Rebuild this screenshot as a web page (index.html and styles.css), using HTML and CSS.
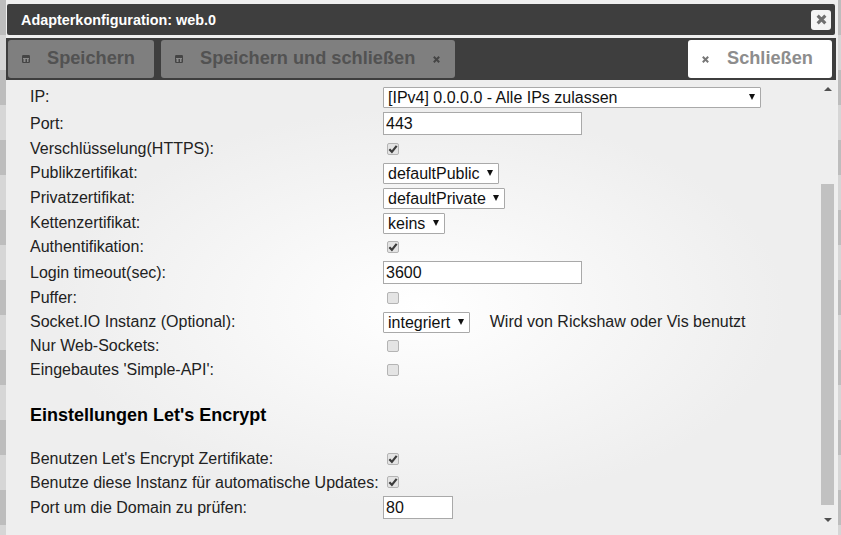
FILE: index.html
```html
<!DOCTYPE html>
<html lang="de">
<head>
<meta charset="utf-8">
<title>Adapterkonfiguration: web.0</title>
<link rel="stylesheet" href="styles.css">
</head>
<body>
<div class="dialog">
  <header class="titlebar">
    <span class="title">Adapterkonfiguration: web.0</span>
    <button class="close-x" aria-label="Schließen"><svg width="11" height="11" viewBox="0 0 10 10"><path d="M1.5 1.5l7 7M8.5 1.5l-7 7" stroke="#6f6f6f" stroke-width="2.8"/></svg></button>
  </header>
  <div class="toolbar">
    <button class="btn btn-disabled"><svg class="ico-save" width="8" height="8" viewBox="0 0 8 8"><rect width="8" height="8" rx="1.2" fill="#454545"/><path d="M1 3h6v1H1zM1.5 4h2v3h-2zM5 4h1.5v3H5z" fill="#8a8a8a"/></svg><span class="btn-label">Speichern</span></button>
    <button class="btn btn-disabled btn-wide"><svg class="ico-save" width="8" height="8" viewBox="0 0 8 8"><rect width="8" height="8" rx="1.2" fill="#454545"/><path d="M1 3h6v1H1zM1.5 4h2v3h-2zM5 4h1.5v3H5z" fill="#8a8a8a"/></svg><span class="btn-label">Speichern und schließen</span><svg class="ico-x" width="7" height="7" viewBox="0 0 7 7"><path d="M.8.8l5.4 5.4M6.2.8L.8 6.2" stroke="#454545" stroke-width="2"/></svg></button>
    <button class="btn btn-white"><svg class="ico-x" width="7" height="7" viewBox="0 0 7 7"><path d="M.8.8l5.4 5.4M6.2.8L.8 6.2" stroke="#777" stroke-width="2"/></svg><span class="btn-label">Schließen</span></button>
  </div>
  <div class="content">
    <div class="form">
      <div class="row h27"><label>IP:</label><span class="sel sel-ip">[IPv4] 0.0.0.0 - Alle IPs zulassen<i class="arrow"></i></span></div>
      <div class="row h25"><label>Port:</label><input class="txt" type="text" value="443"></div>
      <div class="row h24"><label>Verschlüsselung(HTTPS):</label><span class="check"><svg width="10" height="10" viewBox="0 0 9 9"><path d="M1.2 4.8l2.3 2.3 4.3-5.4" fill="none" stroke="#3c3c3c" stroke-width="2"/></svg></span></div>
      <div class="row h25"><label>Publikzertifikat:</label><span class="sel">defaultPublic<i class="arrow"></i></span></div>
      <div class="row h25"><label>Privatzertifikat:</label><span class="sel">defaultPrivate<i class="arrow"></i></span></div>
      <div class="row h24"><label>Kettenzertifikat:</label><span class="sel">keins<i class="arrow"></i></span></div>
      <div class="row h26"><label>Authentifikation:</label><span class="check"><svg width="10" height="10" viewBox="0 0 9 9"><path d="M1.2 4.8l2.3 2.3 4.3-5.4" fill="none" stroke="#3c3c3c" stroke-width="2"/></svg></span></div>
      <div class="row h25"><label>Login timeout(sec):</label><input class="txt" type="text" value="3600"></div>
      <div class="row h24"><label>Puffer:</label><span class="check"></span></div>
      <div class="row h24"><label>Socket.IO Instanz (Optional):</label><span class="sel">integriert<i class="arrow"></i></span><span class="hint">Wird von Rickshaw oder Vis benutzt</span></div>
      <div class="row h24"><label>Nur Web-Sockets:</label><span class="check"></span></div>
      <div class="row h24"><label>Eingebautes 'Simple-API':</label><span class="check"></span></div>
      <h3 class="section">Einstellungen Let's Encrypt</h3>
      <div class="row h24"><label>Benutzen Let's Encrypt Zertifikate:</label><span class="check"><svg width="10" height="10" viewBox="0 0 9 9"><path d="M1.2 4.8l2.3 2.3 4.3-5.4" fill="none" stroke="#3c3c3c" stroke-width="2"/></svg></span></div>
      <div class="row h25"><label>Benutze diese Instanz für automatische Updates:</label><span class="check check-up"><svg width="10" height="10" viewBox="0 0 9 9"><path d="M1.2 4.8l2.3 2.3 4.3-5.4" fill="none" stroke="#3c3c3c" stroke-width="2"/></svg></span></div>
      <div class="row h25"><label>Port um die Domain zu prüfen:</label><input class="txt txt-short" type="text" value="80"></div>
    </div>
    <div class="scrollbar">
      <i class="sb-up"></i>
      <div class="sb-track"><div class="sb-thumb"></div></div>
      <i class="sb-down"></i>
    </div>
  </div>
</div>
</body>
</html>
```
FILE: styles.css
```css
* { box-sizing: border-box; }
html, body { margin: 0; height: 100%; overflow: hidden; }
body {
  background: repeating-linear-gradient(180deg, #bdbdbd 0 35px, #d6d6d6 35px 70px);
  font-family: "Liberation Sans", Arial, sans-serif;
  font-size: 14px;
  color: #222;
}
.dialog {
  margin-left: 6px;
  width: 832px;
  height: 535px;
  padding: 3px 2px 0 0;
  background: #efefef;
  display: flex;
  flex-direction: column;
}
.titlebar {
  margin: 1px 1px 0 1px;
  height: 31px;
  background: #3e3e3e;
  border-radius: 2px;
  display: flex;
  align-items: center;
  justify-content: space-between;
  padding: 0 4px 0 14px;
}
.title { color: #fff; font-weight: 700; font-size: 14.4px; }
.close-x {
  width: 20px;
  height: 20px;
  padding: 0;
  border: 0;
  border-radius: 3px;
  background: #f4f4f4;
  display: flex;
  align-items: center;
  justify-content: center;
}
.toolbar {
  margin-top: 3px;
  height: 42px;
  background: #3e3e3e;
  display: flex;
  align-items: center;
  padding: 0 4px 0 2px;
  gap: 7px;
}
.btn {
  height: 38px;
  padding: 0 0 2px;
  border: 0;
  border-radius: 3px;
  display: flex;
  align-items: center;
  font-family: inherit;
  font-weight: 700;
  font-size: 18.2px;
}
.btn-disabled { background: #7f7f7f; color: #525252; width: 146px; padding-left: 14px; }
.btn-wide { width: 294px; }
.btn-white { background: #fff; color: #8d8d8d; width: 144px; margin-left: auto; padding-left: 14px; }
.ico-save { flex: none; margin: 2px 17px 0 0; }
.btn-white .ico-x { margin: 2px 18px 0 0; }
.btn-wide .ico-x { margin: 2px 0 0 18px; }
.content {
  flex: 1;
  min-height: 0;
  display: flex;
  background: radial-gradient(ellipse at 50% 50%, #ffffff 0%, #eeeeee 62%);
}
.form { flex: 1; padding: 8px 0 0 24px; }
.row { display: flex; align-items: flex-start; color: #222; }
.row label { width: 353px; flex: none; font-size: 16px; line-height: 18px; white-space: nowrap; }
.h24 { height: 24px; }
.h25 { height: 25px; }
.h26 { height: 26px; }
.h27 { height: 27px; }
.sel {
  position: relative;
  display: inline-block;
  height: 21px;
  margin-top: -1px;
  line-height: 19px;
  padding: 0 18.5px 0 4px;
  background: #fff;
  border: 1px solid #a9a9a9;
  border-radius: 1px;
  font-size: 16px;
  color: #111;
}
.sel-ip { width: 378px; }
.arrow {
  position: absolute;
  right: 5px;
  top: 6px;
  width: 0;
  height: 0;
  border-left: 3.5px solid transparent;
  border-right: 3.5px solid transparent;
  border-top: 6px solid #111;
}
.txt {
  width: 199px;
  height: 23px;
  margin-top: -3px;
  padding: 0 2px;
  border: 1px solid #a9a9a9;
  background: #fff;
  font-family: inherit;
  font-size: 16px;
  color: #111;
  border-radius: 0;
}
.txt-short { width: 70px; }
.check {
  width: 12px;
  height: 12px;
  margin: 3px 0 0 4px;
  border: 1px solid #b4b4b4;
  border-radius: 2px;
  background: #e4e4e4;
  display: flex;
  align-items: center;
  justify-content: center;
}
.check-up { margin-top: 2px; }
.hint { margin-left: 20px; font-size: 16px; line-height: 18px; color: #222; }
.section {
  margin: 0;
  height: 65px;
  padding-top: 18px;
  font-size: 18px;
  line-height: 24px;
  font-weight: 700;
  color: #000;
}
.scrollbar {
  width: 17px;
  display: flex;
  flex-direction: column;
  align-items: center;
  flex: none;
}
.sb-up, .sb-down { flex: none; width: 0; height: 0; border-left: 4px solid transparent; border-right: 4px solid transparent; }
.sb-up { margin-top: 7px; border-bottom: 4px solid #505050; }
.sb-down { margin-bottom: 13px; border-top: 4px solid #505050; }
.sb-track { flex: 1; width: 13px; display: flex; flex-direction: column; padding: 93px 0 13px; }
.sb-thumb { flex: 1; background: #c1c1c1; }
```
